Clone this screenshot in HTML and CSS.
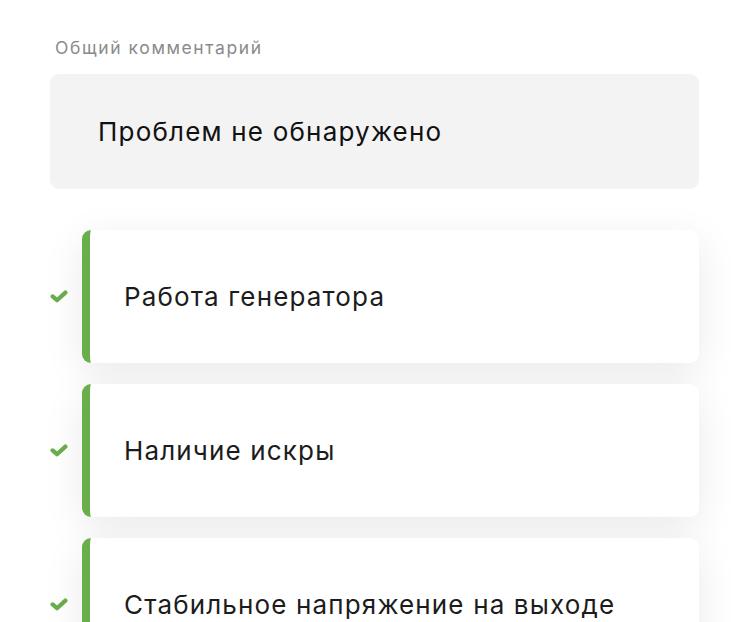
FILE: index.html
```html
<!DOCTYPE html>
<html lang="ru">
<head>
<meta charset="utf-8">
<link rel="stylesheet" href="styles.css">
</head>
<body>
<div class="page">
  <div class="label">Общий комментарий</div>
  <div class="comment">Проблем не обнаружено</div>
  <div class="list">
    <div class="row">
      <svg class="check" viewBox="0 0 18 13" width="18" height="13"><path d="M2.6 6.4 L7 10.2 L15.4 2.6" fill="none" stroke="#6aae4c" stroke-width="4.2" stroke-linecap="round" stroke-linejoin="round"/></svg>
      <div class="card">Работа генератора</div>
    </div>
    <div class="row">
      <svg class="check" viewBox="0 0 18 13" width="18" height="13"><path d="M2.6 6.4 L7 10.2 L15.4 2.6" fill="none" stroke="#6aae4c" stroke-width="4.2" stroke-linecap="round" stroke-linejoin="round"/></svg>
      <div class="card">Наличие искры</div>
    </div>
    <div class="row">
      <svg class="check" viewBox="0 0 18 13" width="18" height="13"><path d="M2.6 6.4 L7 10.2 L15.4 2.6" fill="none" stroke="#6aae4c" stroke-width="4.2" stroke-linecap="round" stroke-linejoin="round"/></svg>
      <div class="card">Стабильное напряжение на выходе</div>
    </div>
  </div>
</div>
</body>
</html>
```
FILE: styles.css
```css
html, body {
  margin: 0;
  padding: 0;
  background: #fff;
  overflow: hidden;
}
body {
  font-family: "Inter", "Roboto", "Liberation Sans", sans-serif;
  color: #1c1c1c;
}
.page {
  width: 750px;
  height: 622px;
  overflow: hidden;
  padding: 36px 51px 0 50px;
  box-sizing: border-box;
}
.label {
  font-size: 17.5px;
  letter-spacing: 1.6px;
  color: #8a8a8a;
  padding-left: 5px;
  line-height: 24px;
}
.comment {
  margin-top: 14px;
  height: 115px;
  background: #f3f3f3;
  border-radius: 9px;
  display: flex;
  align-items: center;
  padding-left: 48px;
  font-size: 26px;
  letter-spacing: 1.2px;
  color: #111;
  box-sizing: border-box;
}
.list {
  margin-top: 41px;
  display: flex;
  flex-direction: column;
  gap: 21px;
}
.row {
  display: flex;
  align-items: center;
}
.check {
  width: 18px;
  height: 13px;
  margin-right: 14px;
  flex: none;
}
.card {
  flex: 1;
  height: 133px;
  background: #fff;
  border-left: 8px solid #6aae4c;
  border-radius: 9px;
  box-shadow: 0 10px 40px rgba(0, 0, 0, 0.085);
  display: flex;
  align-items: center;
  padding-left: 34px;
  font-size: 26px;
  letter-spacing: 1.15px;
  color: #1c1c1c;
  box-sizing: border-box;
}
```
